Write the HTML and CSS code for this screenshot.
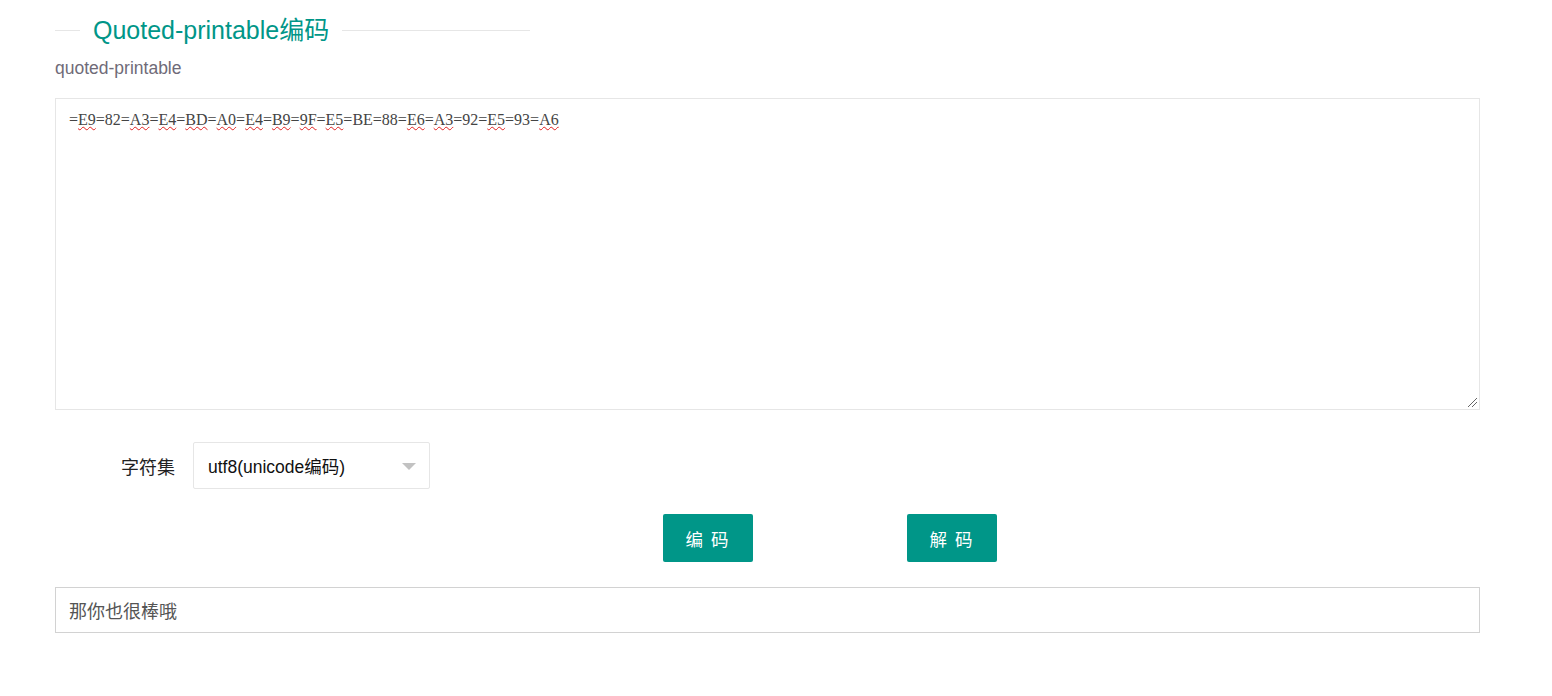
FILE: index.html
```html
<!DOCTYPE html>
<html lang="zh-CN">
<head>
  <meta charset="UTF-8">
  <meta name="viewport" content="width=device-width, initial-scale=1.0">
  <title>Quoted-printable编码</title>
  <link rel="stylesheet" href="styles.css">
</head>
<body>

<div class="page">
  <div class="legend"><span>Quoted-printable编码</span></div>
  <p class="sub">quoted-printable</p>

  <div class="editor" contenteditable="true" spellcheck="false">=<span class="typo">E9</span>=82=<span class="typo">A3</span>=<span class="typo">E4</span>=<span class="typo">BD</span>=<span class="typo">A0</span>=<span class="typo">E4</span>=<span class="typo">B9</span>=<span class="typo">9F</span>=<span class="typo">E5</span>=BE=88=<span class="typo">E6</span>=<span class="typo">A3</span>=92=<span class="typo">E5</span>=93=<span class="typo">A6</span></div>

  <div class="form-row">
    <label class="form-label">字符集</label>
    <div class="select">
      <span>utf8(unicode编码)</span>
      <i class="caret"></i>
    </div>
  </div>

  <div class="btn-row">
    <button class="btn">编 码</button>
    <button class="btn">解 码</button>
  </div>

  <input class="result" type="text" value="那你也很棒哦">
</div>

</body>
</html>
```

FILE: styles.css
```css
body {
  margin: 0;
  padding: 0;
  background: #fff;
  font-family: "Liberation Sans", "Noto Sans CJK SC", sans-serif;
  color: #333;
}
.page {
  padding: 0 72px 40px 55px;
}
.legend {
  display: flex;
  align-items: center;
  width: 475px;
  height: 34px;
  margin-top: 13px;
}
.legend::before,
.legend::after {
  content: "";
  height: 1px;
  background: #e6e6e6;
}
.legend::before {
  width: 25px;
}
.legend::after {
  flex: 1;
}
.legend span {
  padding: 0 13px;
  font-size: 25px;
  line-height: 34px;
  color: #009688;
  white-space: nowrap;
}
.sub {
  margin: 9px 0 0;
  font-size: 17.5px;
  line-height: 24px;
  color: #6f6b78;
}
.editor {
  position: relative;
  margin-top: 18px;
  height: 288px;
  padding: 11px 13px;
  border: 1px solid #e6e6e6;
  font-family: "Liberation Serif", "Noto Sans CJK SC", serif;
  font-size: 16px;
  line-height: 20px;
  color: #444;
  outline: none;
}
.editor::after {
  content: "";
  position: absolute;
  right: 2px;
  bottom: 2px;
  width: 9px;
  height: 9px;
  background: linear-gradient(135deg, transparent 45%, #666 45%, #666 52%, transparent 52%, transparent 70%, #666 70%, #666 77%, transparent 77%);
}
.typo {
  text-decoration: underline wavy #e02020;
  text-decoration-thickness: 1px;
  text-underline-offset: 1px;
}
.form-row {
  display: flex;
  align-items: center;
  margin-top: 32px;
}
.form-label {
  width: 120px;
  padding-right: 18px;
  text-align: right;
  font-size: 18px;
  color: #222;
}
.select {
  display: flex;
  align-items: center;
  justify-content: space-between;
  box-sizing: border-box;
  width: 237px;
  height: 47px;
  padding: 0 13px 0 14px;
  border: 1px solid #e6e6e6;
  border-radius: 2px;
  font-size: 17.5px;
  color: #111;
}
.caret {
  width: 0;
  height: 0;
  border-left: 7px solid transparent;
  border-right: 7px solid transparent;
  border-top: 7px solid #c2c2c2;
  margin-top: 2px;
}
.btn-row {
  display: flex;
  gap: 154px;
  margin-top: 25px;
  padding-left: 608px;
}
.btn {
  width: 90px;
  height: 48px;
  border: none;
  border-radius: 2px;
  background: #009688;
  color: #fff;
  font-family: "Noto Sans CJK SC", sans-serif;
  font-size: 17.5px;
  letter-spacing: 2px;
  cursor: pointer;
}
.result {
  display: block;
  box-sizing: border-box;
  width: 1425px;
  height: 46px;
  margin-top: 25px;
  padding: 0 13px;
  border: 1px solid #d2d2d2;
  font-family: "Noto Sans CJK SC", sans-serif;
  font-size: 18px;
  color: #555;
  outline: none;
}
```
